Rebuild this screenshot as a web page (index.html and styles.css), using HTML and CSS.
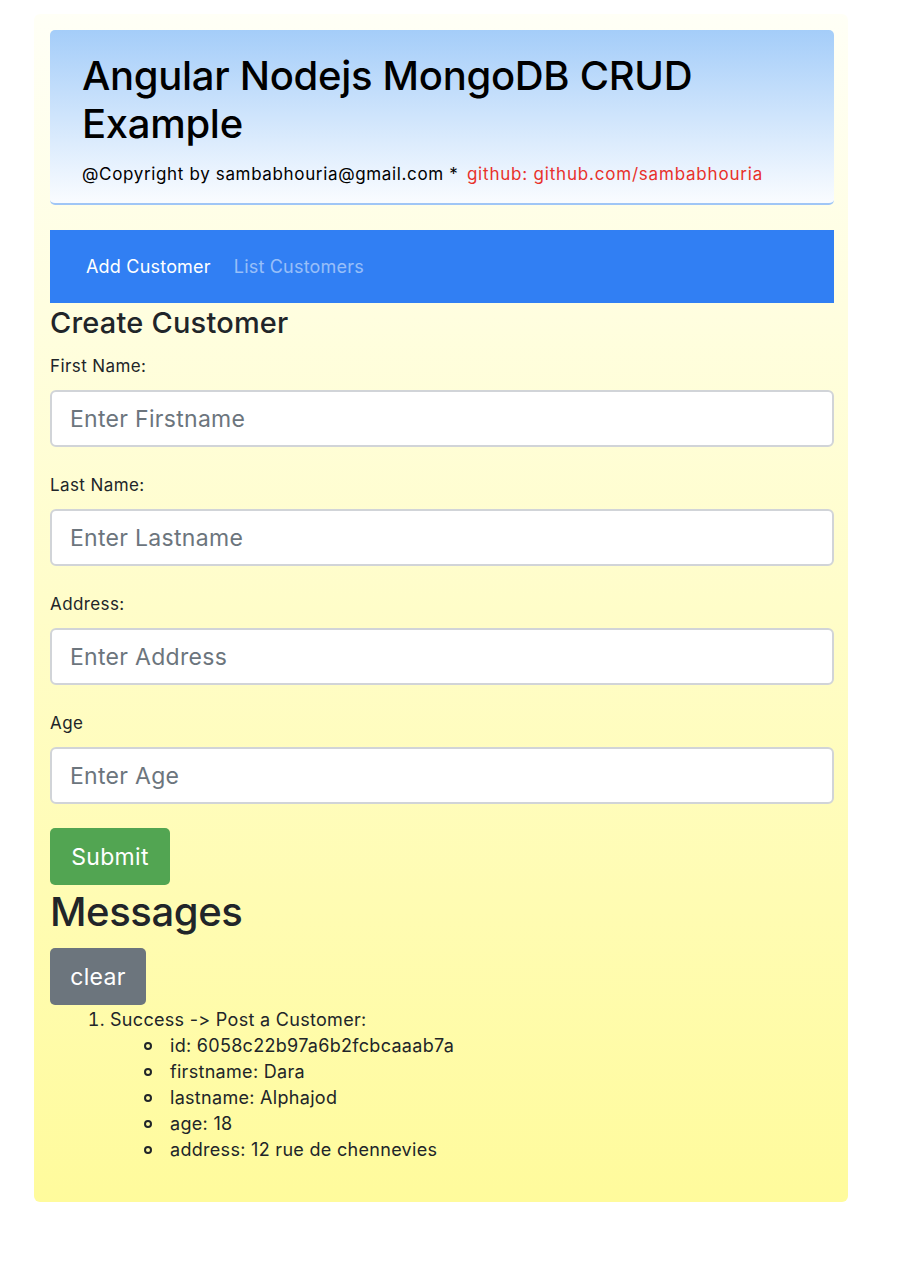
FILE: index.html
```html
<!DOCTYPE html>
<html lang="en">
<head>
<meta charset="utf-8">
<title>Angular Nodejs MongoDB CRUD Example</title>
<link rel="stylesheet" href="styles.css">
</head>
<body>
<div class="app">
  <header class="jumbotron">
    <h1 class="title">Angular Nodejs MongoDB CRUD Example</h1>
    <p class="copy">@Copyright by sambabhouria@gmail.com * <a class="gh" href="#">github: github.com/sambabhouria</a></p>
  </header>
  <nav class="navbar">
    <a class="nav-link active" href="#">Add Customer</a>
    <a class="nav-link" href="#">List Customers</a>
  </nav>
  <h3 class="section-title">Create Customer</h3>
  <form class="form">
    <div class="group">
      <label class="label">First Name:</label>
      <input class="input" type="text" placeholder="Enter Firstname">
    </div>
    <div class="group">
      <label class="label">Last Name:</label>
      <input class="input" type="text" placeholder="Enter Lastname">
    </div>
    <div class="group">
      <label class="label">Address:</label>
      <input class="input" type="text" placeholder="Enter Address">
    </div>
    <div class="group">
      <label class="label">Age</label>
      <input class="input" type="text" placeholder="Enter Age">
    </div>
    <button class="btn btn-success" type="button">Submit</button>
  </form>
  <h2 class="messages-title">Messages</h2>
  <button class="btn btn-secondary" type="button">clear</button>
  <ol class="messages">
    <li>Success -&gt; Post a Customer:
      <ul class="details">
        <li>id: 6058c22b97a6b2fcbcaaab7a</li>
        <li>firstname: Dara</li>
        <li>lastname: Alphajod</li>
        <li>age: 18</li>
        <li>address: 12 rue de chennevies</li>
      </ul>
    </li>
  </ol>
</div>
</body>
</html>
```
FILE: styles.css
```css
html, body {
  margin: 0;
  padding: 0;
  background: #ffffff;
}
body {
  font-family: Inter, "Noto Sans", "Liberation Sans", sans-serif;
  font-feature-settings: "calt" 0, "liga" 0;
  color: #212529;
  padding: 14px 0 0 34px;
}
.app {
  width: 814px;
  box-sizing: border-box;
  padding: 16px 14px 39px 16px;
  border-radius: 6px;
  background: linear-gradient(to bottom, #fffff6 0%, #fffdc9 50%, #fffb9c 100%);
}
.jumbotron {
  background: linear-gradient(to bottom, #a4cdf9 0%, #fafcff 100%);
  border-radius: 5px;
  border-bottom: 2px solid #a0c6f6;
  padding: 22px 32px 17px;
  margin-bottom: 25px;
}
.title {
  margin: 0 0 14px;
  font-size: 40px;
  line-height: 48px;
  font-weight: 500;
  color: #000;
  letter-spacing: -0.3px;
}
.copy {
  margin: 0;
  font-size: 17px;
  line-height: 24px;
  letter-spacing: 0.65px;
  color: #000;
}
.gh {
  color: #e8312b;
  text-decoration: none;
  margin-left: 3px;
  letter-spacing: 0.8px;
}
.navbar {
  display: flex;
  gap: 23px;
  align-items: center;
  height: 73px;
  padding: 0 36px;
  background: #317ff3;
}
.nav-link {
  font-size: 18px;
  letter-spacing: 0.2px;
  color: rgba(255, 255, 255, 0.5);
  text-decoration: none;
}
.nav-link.active {
  color: #ffffff;
}
.section-title {
  margin: 3px 0 14px;
  font-size: 29px;
  line-height: 34px;
  letter-spacing: 0.2px;
  font-weight: 500;
}
.form {
  margin: 0;
}
.group {
  display: flex;
  flex-direction: column;
  margin-bottom: 26px;
}
.label {
  font-size: 17px;
  line-height: 24px;
  letter-spacing: 0.4px;
  margin-bottom: 12px;
}
.input {
  height: 57px;
  box-sizing: border-box;
  border: 2px solid #d1d4d8;
  border-radius: 6px;
  background: #fff;
  padding: 0 18px;
  font-family: inherit;
  font-size: 23px;
  letter-spacing: 0.3px;
  color: #495057;
}
.input::placeholder {
  color: #6c757d;
}
.btn {
  display: block;
  height: 57px;
  border: none;
  border-radius: 5px;
  padding: 0 20px;
  font-family: inherit;
  font-size: 23px;
  letter-spacing: 0.3px;
  color: #fff;
}
.btn-success {
  background: #52a552;
  width: 120px;
  margin-top: -2px;
}
.btn-secondary {
  background: #6c757d;
  width: 96px;
}
.messages-title {
  margin: 3px 0 12px;
  font-size: 40px;
  line-height: 48px;
  font-weight: 500;
  letter-spacing: -0.4px;
}
.messages {
  margin: 2px 0 0;
  padding-left: 60px;
  font-size: 18px;
  line-height: 26px;
  letter-spacing: 0.3px;
}
.details {
  list-style: none;
  margin: 0;
  padding-left: 60px;
}
.details li::before {
  content: "";
  display: inline-block;
  box-sizing: border-box;
  width: 8px;
  height: 8px;
  border: 2px solid #212529;
  border-radius: 50%;
  margin-left: -26px;
  margin-right: 18px;
  vertical-align: 2px;
}
```
